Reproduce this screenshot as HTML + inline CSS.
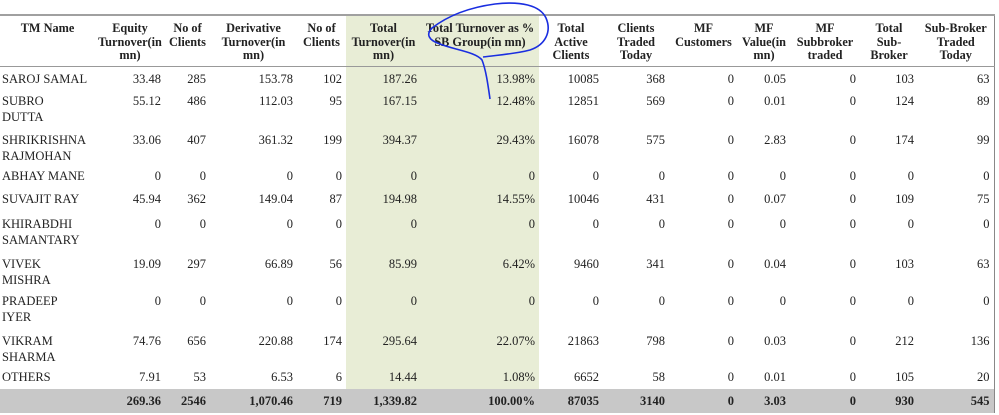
<!DOCTYPE html>
<html><head><style>
body{margin:0;background:#fff;width:999px;height:415px;overflow:hidden;position:relative;font-family:"Liberation Serif",serif;font-size:12.5px;color:#222}
table{position:absolute;left:0;top:14px;width:994px;border-collapse:collapse;table-layout:fixed;border-top:2px solid #a0a0a0;border-right:1px solid #888}
th{font-weight:bold;font-size:12.3px;line-height:13.5px;padding:6px 0 0;text-align:center;vertical-align:top;height:51px;border-bottom:1px solid #999;box-sizing:border-box;white-space:nowrap;overflow:hidden}
td{vertical-align:top;padding:4px 4px 0 2px;line-height:16px;text-align:right;white-space:nowrap;box-sizing:border-box}
td:first-child{text-align:left}
.g{background:#e8edd6}
tr.t td{background:#c8c8c8;font-weight:bold;padding-top:4px}
</style></head><body>
<table>
<colgroup><col style="width:95px"><col style="width:70px"><col style="width:45px"><col style="width:87px"><col style="width:49px"><col style="width:75px"><col style="width:118px"><col style="width:64px"><col style="width:66px"><col style="width:69px"><col style="width:52px"><col style="width:70px"><col style="width:58px"><col style="width:76px"></colgroup>
<tr style="height:51px"><th>TM Name</th><th>Equity<br>Turnover(in<br>mn)</th><th>No of<br>Clients</th><th>Derivative<br>Turnover(in<br>mn)</th><th>No of<br>Clients</th><th class="g">Total<br>Turnover(in<br>mn)</th><th class="g">Total Turnover as %<br>SB Group(in mn)</th><th>Total<br>Active<br>Clients</th><th>Clients<br>Traded<br>Today</th><th>MF<br>Customers</th><th>MF<br>Value(in<br>mn)</th><th>MF<br>Subbroker<br>traded</th><th>Total<br>Sub-<br>Broker</th><th>Sub-Broker<br>Traded<br>Today</th></tr>
<tr style="height:23px"><td>SAROJ SAMAL</td><td>33.48</td><td>285</td><td>153.78</td><td>102</td><td class="g">187.26</td><td class="g">13.98%</td><td>10085</td><td>368</td><td>0</td><td>0.05</td><td>0</td><td>103</td><td>63</td></tr>
<tr style="height:39px"><td>SUBRO<br>DUTTA</td><td>55.12</td><td>486</td><td>112.03</td><td>95</td><td class="g">167.15</td><td class="g">12.48%</td><td>12851</td><td>569</td><td>0</td><td>0.01</td><td>0</td><td>124</td><td>89</td></tr>
<tr style="height:36px"><td>SHRIKRISHNA<br>RAJMOHAN</td><td>33.06</td><td>407</td><td>361.32</td><td>199</td><td class="g">394.37</td><td class="g">29.43%</td><td>16078</td><td>575</td><td>0</td><td>2.83</td><td>0</td><td>174</td><td>99</td></tr>
<tr style="height:23px"><td>ABHAY MANE</td><td>0</td><td>0</td><td>0</td><td>0</td><td class="g">0</td><td class="g">0</td><td>0</td><td>0</td><td>0</td><td>0</td><td>0</td><td>0</td><td>0</td></tr>
<tr style="height:25px"><td>SUVAJIT RAY</td><td>45.94</td><td>362</td><td>149.04</td><td>87</td><td class="g">194.98</td><td class="g">14.55%</td><td>10046</td><td>431</td><td>0</td><td>0.07</td><td>0</td><td>109</td><td>75</td></tr>
<tr style="height:40px"><td>KHIRABDHI<br>SAMANTARY</td><td>0</td><td>0</td><td>0</td><td>0</td><td class="g">0</td><td class="g">0</td><td>0</td><td>0</td><td>0</td><td>0</td><td>0</td><td>0</td><td>0</td></tr>
<tr style="height:37px"><td>VIVEK<br>MISHRA</td><td>19.09</td><td>297</td><td>66.89</td><td>56</td><td class="g">85.99</td><td class="g">6.42%</td><td>9460</td><td>341</td><td>0</td><td>0.04</td><td>0</td><td>103</td><td>63</td></tr>
<tr style="height:40px"><td>PRADEEP<br>IYER</td><td>0</td><td>0</td><td>0</td><td>0</td><td class="g">0</td><td class="g">0</td><td>0</td><td>0</td><td>0</td><td>0</td><td>0</td><td>0</td><td>0</td></tr>
<tr style="height:36px"><td>VIKRAM<br>SHARMA</td><td>74.76</td><td>656</td><td>220.88</td><td>174</td><td class="g">295.64</td><td class="g">22.07%</td><td>21863</td><td>798</td><td>0</td><td>0.03</td><td>0</td><td>212</td><td>136</td></tr>
<tr style="height:24px"><td>OTHERS</td><td>7.91</td><td>53</td><td>6.53</td><td>6</td><td class="g">14.44</td><td class="g">1.08%</td><td>6652</td><td>58</td><td>0</td><td>0.01</td><td>0</td><td>105</td><td>20</td></tr>
<tr class="t" style="height:24px"><td></td><td>269.36</td><td>2546</td><td>1,070.46</td><td>719</td><td>1,339.82</td><td>100.00%</td><td>87035</td><td>3140</td><td>0</td><td>3.03</td><td>0</td><td>930</td><td>545</td></tr>
</table>
<svg style="position:absolute;left:0;top:0" width="999" height="415"><path d="M490,99 C488,85 486,70 482,60 C476,52 455,50 440,44 C428,40 426,34 432,28 C445,18 465,8 495,4 C520,1 540,5 546,18 C552,32 545,45 530,50 C515,54 498,55 483,57" fill="none" stroke="#1a2ee0" stroke-width="1.6"/></svg>
</body></html>
